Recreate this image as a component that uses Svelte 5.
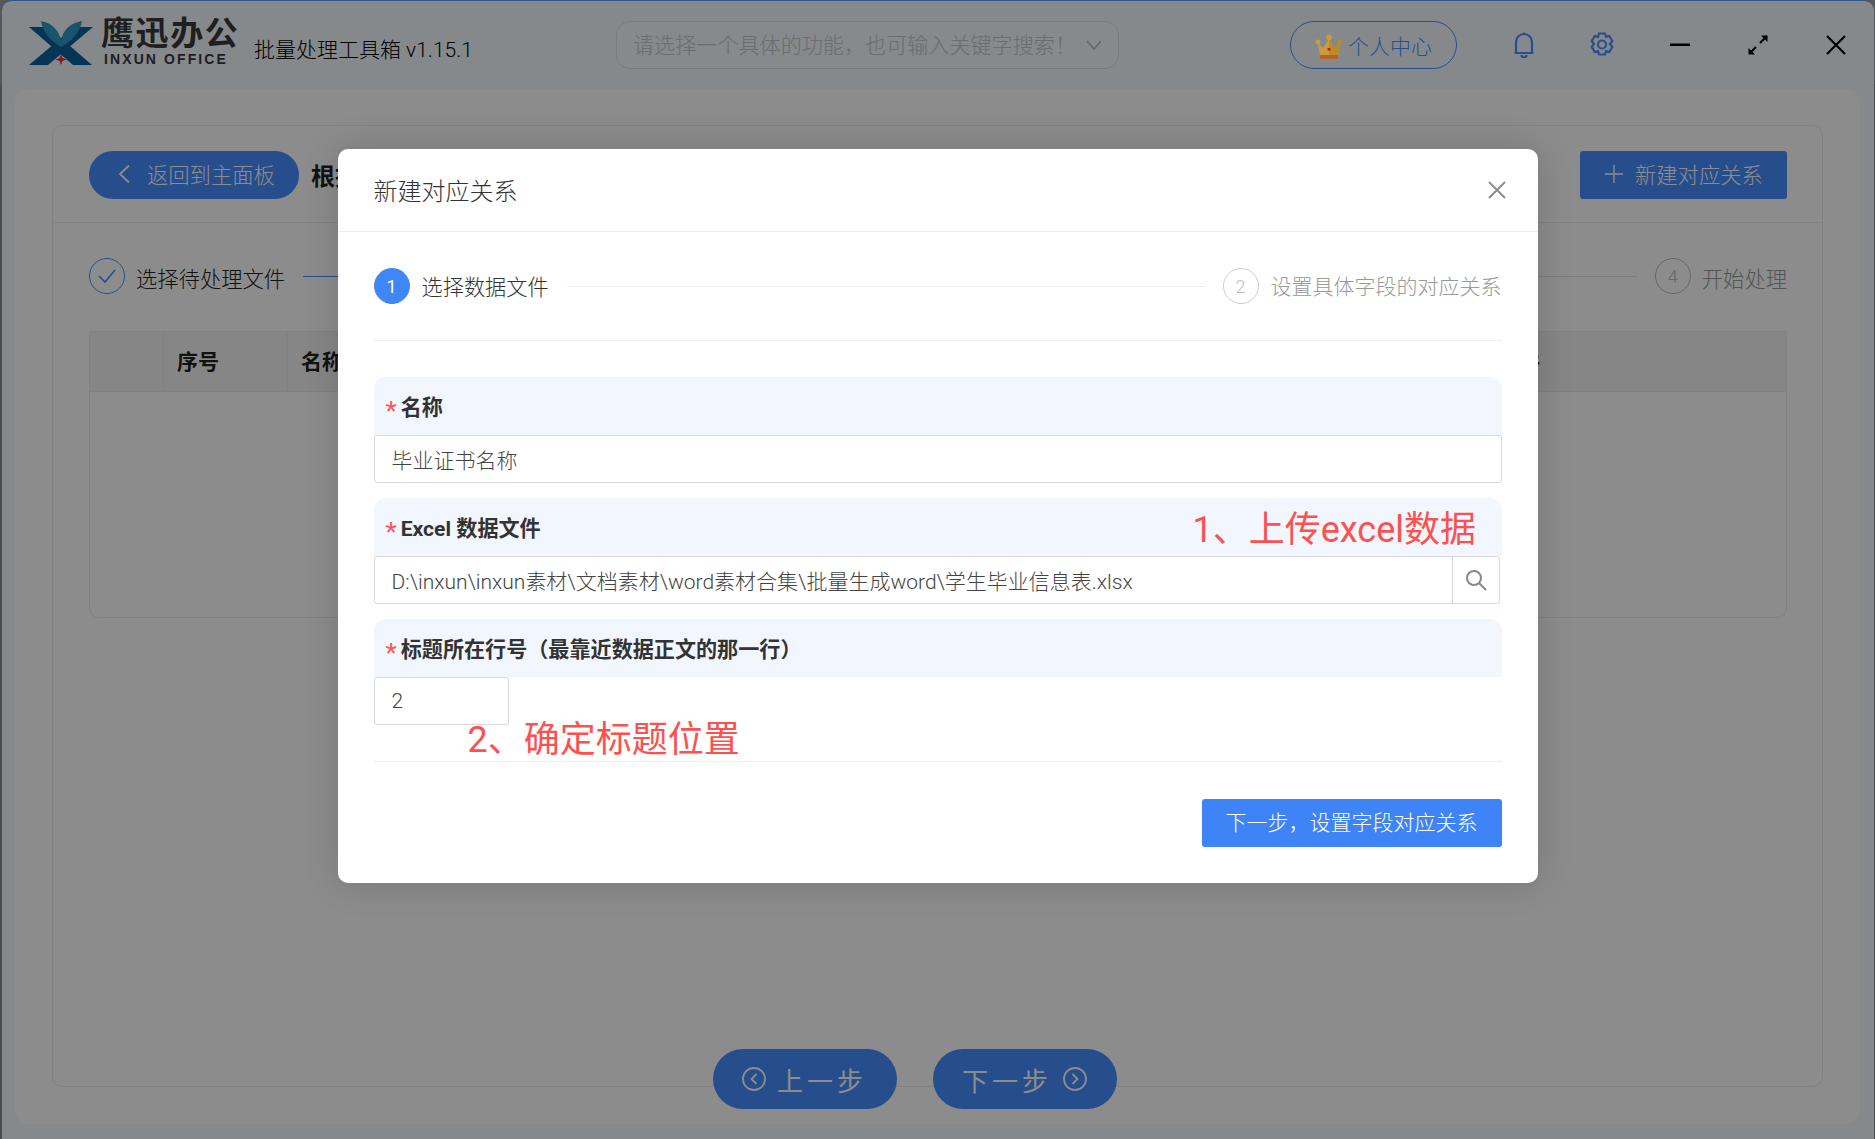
<script lang="ts">
	const pathValue = 'D:\\inxun\\inxun素材\\文档素材\\word素材合集\\批量生成word\\学生毕业信息表.xlsx';
</script>

<div class="desk">
	<div class="window">
		<header class="topbar">
			<svg class="logo-mark" width="64" height="44" viewBox="0 0 64 44">
				<path d="M0 6h19l44 38H44z" fill="#0a5f9e" />
				<path d="M64 6H45L0 44h19z" fill="#0a5f9e" />
				<path d="M12 0c10 2 18 8 20 20C34 8 42 2 53 0c-2 12-10 20-21 26C22 20 14 12 12 0z" fill="#2e9ac4" />
				<path d="M32 33l1.500 4 4 1.500-4 1.500-1.500 4-1.500-4-4-1.500 4-1.500z" fill="#e8333a" />
			</svg>
			<div class="logo-text">
				<div class="logo-cn">鹰迅办公</div>
				<div class="logo-en">INXUN OFFICE</div>
			</div>
			<div class="app-title">批量处理工具箱 v1.15.1</div>
			<div class="search">
				<span class="search-text">请选择一个具体的功能，也可输入关键字搜索！</span>
				<svg width="16" height="10" viewBox="0 0 16 10" fill="none" stroke="#b8bcc4" stroke-width="1.6"><path d="M1 1l7 8 7-8" /></svg>
			</div>
			<div class="user-btn">
				<svg class="crown" width="28" height="26" viewBox="0 0 28 26">
					<path d="M3 9l5 5 6-9 6 9 5-5-2 13H5z" fill="#cc9c3c" />
					<path d="M14 5l6 9 5-5-2 13h-9z" fill="#bd8a24" />
					<circle cx="3" cy="8" r="2.4" fill="#cc9c3c" />
					<circle cx="14" cy="3.4" r="2.8" fill="#cc9c3c" />
					<circle cx="25" cy="8" r="2.4" fill="#bd8a24" />
					<rect x="5" y="21" width="18" height="4" fill="#b8602e" />
					<rect x="12.5" y="14" width="3" height="2.6" fill="#b42a20" />
				</svg>
				<span>个人中心</span>
			</div>
			<svg class="tool bell" width="20" height="26" viewBox="0 0 20 26" fill="none" stroke="#4a90ff" stroke-width="2.2">
				<path d="M2 21V10a8 8 0 0 1 16 0v11zM0.5 21h19M10 0.5V2M7.5 23a2.5 2.5 0 0 0 5 0" />
			</svg>
			<svg class="tool gear" width="24" height="26" viewBox="0 0 24 26" fill="none" stroke="#4a90ff" stroke-width="2.2">
				<path d="M9 1.5h6l1 3.4 3.3-.9 3 5.2-2.4 2.8 2.4 2.800-3 5.200-3.300-.9-1 3.400H9l-1-3.400-3.300.9-3-5.200L4.100 12 1.700 9.200l3-5.200L8 4.900z" />
				<circle cx="12" cy="12.500" r="4" />
			</svg>
			<svg class="tool minimize" width="20" height="4" viewBox="0 0 20 4"><rect y="0.500" width="20" height="2.500" fill="#000" /></svg>
			<svg class="tool expand" width="20" height="20" viewBox="0 0 20 20" fill="none" stroke="#000" stroke-width="2.200">
				<path d="M12 8l7-7M2 18l6-6" />
				<path d="M13 0.500h6.500V7z M0.500 13V19.500H7z" fill="#000" stroke="none" />
			</svg>
			<svg class="tool close" width="20" height="20" viewBox="0 0 20 20" fill="none" stroke="#000" stroke-width="2.200"><path d="M1 1l18 18M19 1L1 19" /></svg>
		</header>

		<main class="panel">
			<section class="card">
				<div class="card-head">
					<div class="back-btn">
						<svg width="12" height="20" viewBox="0 0 12 20" fill="none" stroke="#fff" stroke-width="1.800"><path d="M11 1.500L2 10l9 8.500" /></svg>
						<span>返回到主面板</span>
					</div>
					<h1 class="page-title">根据</h1>
					<div class="new-btn">
						<svg width="18" height="18" viewBox="0 0 18 18" stroke="#fff" stroke-width="1.400"><path d="M9 0v18M0 9h18" /></svg>
						<span>新建对应关系</span>
					</div>
				</div>

				<div class="page-steps">
					<div class="page-circle done">
						<svg width="18" height="15" viewBox="0 0 18 15" fill="none" stroke="#4a90ff" stroke-width="1.600"><path d="M1 7l6 6L17 1" /></svg>
					</div>
					<span class="page-step-text">选择待处理文件</span>
					<div class="page-line blue"></div>
					<div class="page-line"></div>
					<div class="page-circle">4</div>
					<span class="page-step-text muted">开始处理</span>
				</div>

				<div class="table">
					<div class="thead">
						<div class="th" style="width: 74px"></div>
						<div class="th" style="width: 124px">序号</div>
						<div class="th" style="width: 1000px">名称</div>
						<div class="th last">数据文件</div>
					</div>
				</div>

				<div class="pager">
					<div class="pager-btn">
						<svg width="24" height="24" viewBox="0 0 24 24" fill="none" stroke="#fff" stroke-width="1.800">
							<circle cx="12" cy="12" r="11" /><path d="M14.500 7l-5 5 5 5" />
						</svg>
						<span>上一步</span>
					</div>
					<div class="pager-btn">
						<span>下一步</span>
						<svg width="24" height="24" viewBox="0 0 24 24" fill="none" stroke="#fff" stroke-width="1.800">
							<circle cx="12" cy="12" r="11" /><path d="M9.500 7l5 5-5 5" />
						</svg>
					</div>
				</div>
			</section>
		</main>
	</div>

	<div class="mask"></div>

	<div class="dialog-wrap">
		<div class="dialog">
			<div class="dialog-head">
				<span class="dialog-title">新建对应关系</span>
				<svg class="dialog-close" width="18" height="18" viewBox="0 0 18 18" fill="none" stroke="#888" stroke-width="1.800"><path d="M1 1l16 16M17 1L1 17" /></svg>
			</div>

			<div class="dialog-body">
				<div class="steps">
					<div class="step-circle active">1</div>
					<span class="step-text">选择数据文件</span>
					<div class="step-line"></div>
					<div class="step-circle">2</div>
					<span class="step-text muted">设置具体字段的对应关系</span>
				</div>

				<div class="field">
					<div class="label"><span class="star">*</span>名称</div>
					<div class="input">毕业证书名称</div>
				</div>
				<div class="field">
					<div class="label"><span class="star">*</span>Excel 数据文件</div>
					<div class="input with-append">
						<span class="input-value">{pathValue}</span>
						<div class="append">
							<svg width="22" height="22" viewBox="0 0 22 22" fill="none" stroke="#888" stroke-width="2"><circle cx="9" cy="9" r="7" /><path d="M14 14l7 7" /></svg>
						</div>
					</div>
				</div>
				<div class="field">
					<div class="label"><span class="star">*</span>标题所在行号（最靠近数据正文的那一行）</div>
					<div class="input short">2</div>
				</div>

				<div class="dialog-foot">
					<div class="primary-btn">下一步，设置字段对应关系</div>
				</div>
			</div>

			<div class="note note-one">1、上传excel数据</div>
			<div class="note note-two">2、确定标题位置</div>
		</div>
	</div>
</div>

<style>
	:global(body) {
		margin: 0;
		background: #8a8d93;
	}

	.desk {
		position: relative;
		width: 1875px;
		height: 1139px;
		overflow: hidden;
		padding: 0 1px 0 2px;
		box-sizing: border-box;
		background: linear-gradient(#9aa0aa 0, #9aa0aa 84px, #8a8d93 84px);
		font-family: Roboto, "Noto Sans CJK SC", "Noto Sans", sans-serif;
		font-weight: 300;
		color: #333;
	}

	.window {
		display: flex;
		flex-direction: column;
		height: 100%;
		box-sizing: border-box;
		border-top: 1px solid #5b9bff;
		border-radius: 10px 10px 0 0;
		background: #f4f9ff;
	}

	.topbar {
		display: flex;
		align-items: center;
		height: 88px;
		flex-shrink: 0;
	}

	.logo-mark {
		margin: -4px 0 0 27px;
	}

	.logo-text {
		margin-left: 8px;
		width: 145px;
	}

	.logo-cn {
		font-size: 33px;
		line-height: 30px;
		font-weight: 700;
		letter-spacing: 1.600px;
		color: #3a3a3a;
		margin-top: -6px;
	}

	.logo-en {
		font-family: "Liberation Sans", sans-serif;
		font-size: 14px;
		line-height: 14px;
		font-weight: 700;
		letter-spacing: 2.100px;
		color: #3a3a3a;
		margin: 3px 0 0 3px;
	}

	.app-title {
		margin: 6px 0 0 8px;
		font-size: 21px;
		color: #000;
		width: 362px;
		white-space: nowrap;
	}

	.search {
		display: flex;
		align-items: center;
		justify-content: space-between;
		width: 503px;
		height: 48px;
		box-sizing: border-box;
		padding: 0 16px 0 16px;
		border: 1px solid #dcdfe6;
		border-radius: 14px;
		background: #f6f9fd;
	}

	.search-text {
		padding-bottom: 2px;
		font-size: 21.100px;
		color: #c4c6cc;
		white-space: nowrap;
	}

	.user-btn {
		display: flex;
		align-items: center;
		gap: 5px;
		width: 167px;
		height: 48px;
		box-sizing: border-box;
		margin-left: 171px;
		padding-left: 24px;
		border: 1px solid #4a90ff;
		border-radius: 24px;
		font-size: 21px;
		color: #4a90ff;
	}

	/* kept above the page mask, the crown is not dimmed in the app */
	.crown {
		position: relative;
		z-index: 3;
		margin-top: 3px;
	}

	.tool {
		flex-shrink: 0;
	}

	.bell {
		margin-left: 57px;
	}

	.gear {
		margin-left: 56px;
	}

	.minimize {
		margin-left: 56px;
	}

	.expand {
		margin-left: 58px;
	}

	.close {
		margin-left: 58px;
	}

	.panel {
		flex: 1;
		display: flex;
		margin: 0 14px 15px 13px;
		border-radius: 14px;
		background: #fff;
	}

	.card {
		flex: 1;
		display: flex;
		flex-direction: column;
		margin: 36px 37px 37px 37px;
		border: 1px solid #ebebeb;
		border-radius: 10px;
	}

	.card-head {
		display: flex;
		align-items: center;
		height: 97px;
		flex-shrink: 0;
		padding: 2px 35px 0 36px;
		box-sizing: border-box;
		border-bottom: 1px solid #ebebeb;
	}

	.back-btn {
		display: flex;
		align-items: center;
		gap: 17px;
		width: 210px;
		height: 48px;
		box-sizing: border-box;
		padding: 0 0 3px 29px;
		border-radius: 24px;
		background: #468cff;
		color: #fff;
		font-size: 21.300px;
	}

	.page-title {
		margin: 0 0 2px 12px;
		font-size: 24px;
		font-weight: 700;
		color: #222;
	}

	.new-btn {
		display: flex;
		align-items: center;
		gap: 12px;
		width: 207px;
		height: 48px;
		box-sizing: border-box;
		margin-left: auto;
		padding: 0 0 3px 25px;
		border-radius: 3px;
		background: #468cff;
		color: #fff;
		font-size: 21.300px;
	}

	.page-steps {
		display: flex;
		align-items: center;
		margin-top: 35px;
		padding: 0 35px 0 36px;
	}

	.page-circle {
		display: flex;
		align-items: center;
		justify-content: center;
		width: 36px;
		height: 36px;
		box-sizing: border-box;
		border: 1px solid #bbb;
		border-radius: 50%;
		color: #bbb;
		font-size: 18px;
	}

	.page-circle.done {
		border-color: #4a90ff;
	}

	.page-step-text {
		margin: 2px 0 0 11px;
		font-size: 21.300px;
		color: #222;
	}

	.page-step-text.muted {
		color: #999;
	}

	.page-line {
		flex: 1;
		height: 1px;
		margin-right: 18px;
		background: #e4e4e4;
	}

	.page-line.blue {
		margin: 0 0 0 18px;
		background: #4a90ff;
	}

	.table {
		height: 285px;
		margin: 37px 35px 0 36px;
		border: 1px solid #ebebeb;
		border-radius: 2px 2px 10px 10px;
	}

	.thead {
		display: flex;
		height: 59px;
		background: #f5f5f5;
		border-bottom: 1px solid #ececec;
	}

	.th {
		box-sizing: border-box;
		padding-left: 13px;
		border-right: 1px solid #ececec;
		font-size: 21px;
		line-height: 61px;
		font-weight: 700;
		color: #222;
		white-space: nowrap;
	}

	.th.last {
		width: 252px;
		padding-left: 0;
		border-right: none;
		text-align: right;
	}

	.pager {
		display: flex;
		justify-content: center;
		gap: 36px;
		margin: auto 0 -23px;
		padding-right: 46px;
	}

	.pager-btn {
		display: flex;
		align-items: center;
		justify-content: center;
		gap: 11px;
		width: 184px;
		height: 60px;
		border-radius: 30px;
		background: #468cff;
		color: #fff;
		font-size: 26px;
		font-weight: 400;
		letter-spacing: 4px;
	}

	.mask {
		position: absolute;
		inset: 0;
		z-index: 2;
		background: rgba(0, 0, 0, 0.45);
	}

	.dialog-wrap {
		position: absolute;
		inset: 0;
		z-index: 4;
		display: flex;
		justify-content: center;
		padding-top: 149px;
		box-sizing: border-box;
	}

	.dialog {
		position: relative;
		width: 1200px;
		height: 734px;
		border-radius: 10px;
		background: #fff;
		box-shadow: 0 0 36px rgba(0, 0, 0, 0.16);
	}

	.dialog-head {
		display: flex;
		align-items: center;
		justify-content: space-between;
		height: 83px;
		box-sizing: border-box;
		padding: 0 32px 2px 36px;
		border-bottom: 1px solid #eee;
	}

	.dialog-title {
		font-size: 24px;
		color: #333;
	}

	.dialog-close {
		margin-top: 2px;
	}

	.dialog-body {
		padding: 0 36px;
	}

	.steps {
		display: flex;
		align-items: center;
		padding: 36px 0;
		border-bottom: 1px solid #eee;
	}

	.step-circle {
		display: flex;
		align-items: center;
		justify-content: center;
		width: 36px;
		height: 36px;
		box-sizing: border-box;
		border: 1px solid #ccc;
		border-radius: 50%;
		color: #bbb;
		font-size: 18px;
		flex-shrink: 0;
	}

	.step-circle.active {
		border-color: #3f86f7;
		background: #3f86f7;
		color: #fff;
		font-weight: 400;
	}

	.step-text {
		margin: 0 0 2px 12px;
		font-size: 21.200px;
		color: #333;
		white-space: nowrap;
	}

	.step-text.muted {
		font-size: 21px;
		color: #999;
	}

	.step-line {
		flex: 1;
		height: 1px;
		margin: 0 18px;
		background: #eee;
	}

	.field {
		margin-top: 15px;
	}

	.steps + .field {
		margin-top: 36px;
	}

	.label {
		height: 58px;
		box-sizing: border-box;
		padding-left: 12px;
		border-radius: 12px 12px 0 0;
		background: #f2f6fe;
		font-size: 21.100px;
		line-height: 62px;
		font-weight: 700;
		color: #333;
	}

	.star {
		margin-right: 4px;
		font-size: 26px;
		font-weight: 400;
		line-height: 1;
		vertical-align: -5px;
		color: #ff5555;
	}

	.input {
		display: flex;
		align-items: center;
		height: 48px;
		box-sizing: border-box;
		padding-left: 17px;
		border: 1px solid #d9d9d9;
		border-radius: 3px;
		background: #fff;
		font-size: 21px;
		color: #444;
	}

	.input.with-append {
		margin-right: 2px;
		padding-left: 0;
	}

	.input-value {
		flex: 1;
		padding-left: 17px;
		white-space: nowrap;
	}

	.append {
		display: flex;
		align-items: center;
		justify-content: center;
		width: 46px;
		height: 100%;
		border-left: 1px solid #d9d9d9;
	}

	.input.short {
		width: 135px;
	}

	.dialog-foot {
		display: flex;
		justify-content: flex-end;
		margin-top: 36px;
		padding-top: 37px;
		border-top: 1px solid #eee;
	}

	.primary-btn {
		width: 300px;
		height: 48px;
		border-radius: 3px;
		background: #3f84f6;
		color: #fff;
		font-size: 21px;
		line-height: 48px;
		text-align: center;
		box-shadow: 0 2px 4px rgba(0, 0, 0, 0.04);
	}

	.note {
		position: absolute;
		font-size: 36px;
		font-weight: 400;
		line-height: 50px;
		color: #ff5050;
		white-space: nowrap;
	}

	.note-one {
		left: 855px;
		top: 356px;
	}

	.note-two {
		left: 130px;
		top: 566px;
	}
</style>
